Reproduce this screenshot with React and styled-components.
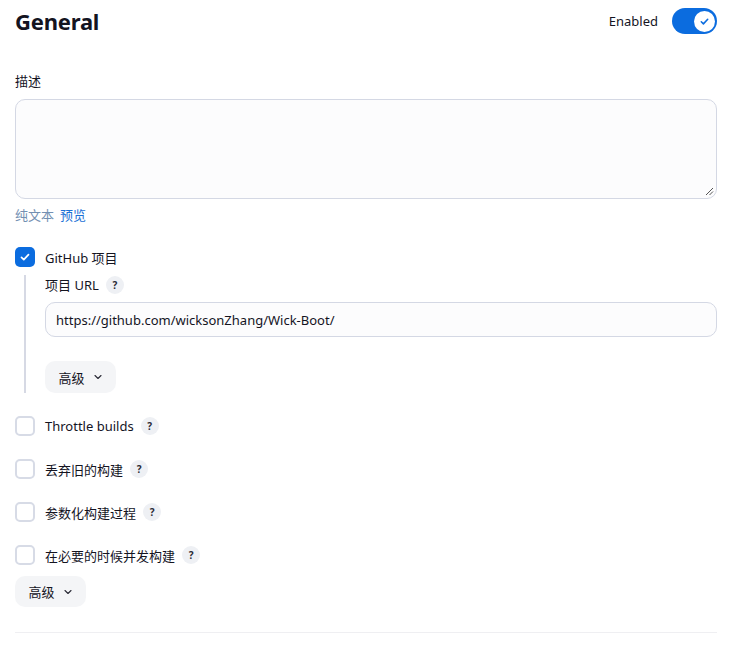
import React from "react";
import styled, { createGlobalStyle } from "styled-components";

const GlobalStyle = createGlobalStyle`
  body {
    margin: 0;
    background: #ffffff;
    font-family: "Noto Sans", "Noto Sans CJK SC", sans-serif;
    color: #14141f;
  }
`;

const Page = styled.div`
  width: 735px;
  box-sizing: border-box;
  padding: 0 18px 0 15px;
`;

const Header = styled.div`
  height: 42px;
  display: flex;
  align-items: center;
  justify-content: space-between;
`;

const Title = styled.h1`
  margin: 0;
  font-size: 22px;
  font-weight: 700;
  letter-spacing: -0.2px;
`;

const EnabledWrap = styled.label`
  display: flex;
  align-items: center;
  gap: 14px;
  font-size: 13px;
`;

const Toggle = styled.span`
  width: 45px;
  height: 26px;
  border-radius: 13px;
  background: #0b6cdf;
  display: flex;
  align-items: center;
  justify-content: flex-end;
  padding: 0 2px;
  box-sizing: border-box;
`;

const Knob = styled.span`
  width: 21px;
  height: 21px;
  border-radius: 50%;
  background: #fff;
  display: flex;
  align-items: center;
  justify-content: center;
`;

const FieldLabel = styled.div`
  margin-top: ${(p) => p.$top || 0}px;
  font-size: 13px;
  line-height: 20px;
  display: flex;
  align-items: center;
  gap: 10px;
`;

const TextArea = styled.div`
  margin-top: 8px;
  height: 100px;
  box-sizing: border-box;
  border: 1px solid #d4d8e4;
  border-radius: 10px;
  background: #fcfcfd;
  position: relative;
`;

const Grip = styled.svg`
  position: absolute;
  right: 2px;
  bottom: 2px;
`;

const Links = styled.div`
  margin-top: 6px;
  font-size: 13px;
  line-height: 20px;
  display: flex;
  gap: 6px;
`;

const LinkText = styled.span`
  color: ${(p) => (p.$muted ? "#7390b2" : "#1a70d6")};
`;

const CheckRow = styled.div`
  margin-top: ${(p) => p.$top}px;
  height: 20px;
  display: flex;
  align-items: center;
  gap: 10px;
  font-size: 13px;
`;

const Box = styled.span`
  width: 20px;
  height: 20px;
  box-sizing: border-box;
  border-radius: 5px;
  flex-shrink: 0;
  display: flex;
  align-items: center;
  justify-content: center;
  background: ${(p) => (p.$checked ? "#0b6cdf" : "#fff")};
  border: ${(p) => (p.$checked ? "none" : "2px solid #d7dbe6")};
`;

const Help = styled.span`
  width: 18px;
  height: 18px;
  border-radius: 50%;
  background: #eef0f4;
  color: #2a2a35;
  font-size: 10px;
  font-weight: 700;
  display: inline-flex;
  align-items: center;
  justify-content: center;
  margin-left: -3px;
`;

const Nested = styled.div`
  margin: 8px 0 0 9px;
  border-left: 2px solid #d6d9e4;
  padding-left: 19px;
`;

const Input = styled.div`
  margin-top: 7px;
  height: 35px;
  box-sizing: border-box;
  border: 1px solid #d4d8e4;
  border-radius: 10px;
  background: #fcfcfd;
  display: flex;
  align-items: center;
  padding: 0 10px;
  font-size: 13px;
`;

const AdvancedButton = styled.div`
  margin-top: ${(p) => p.$top}px;
  height: ${(p) => p.$h || 32}px;
  width: 71px;
  box-sizing: border-box;
  border-radius: 10px;
  background: #f4f5f7;
  display: flex;
  align-items: center;
  justify-content: center;
  gap: 8px;
  font-size: 13px;
`;

const Divider = styled.hr`
  margin: 25px 0 0;
  border: none;
  border-top: 1px solid #efeff2;
`;

const Check = ({ size = 12, color = "#fff" }) => (
  <svg width={size} height={size} viewBox="0 0 12 12" fill="none">
    <path d="M2.5 6.3l2.3 2.3 4.7-5" stroke={color} strokeWidth="1.7" strokeLinecap="round" strokeLinejoin="round" />
  </svg>
);

const Chevron = () => (
  <svg width="10" height="10" viewBox="0 0 10 10" fill="none">
    <path d="M2 3.5l3 3 3-3" stroke="#2a2a35" strokeWidth="1.1" strokeLinecap="round" strokeLinejoin="round" />
  </svg>
);

const Option = ({ label, top }) => (
  <CheckRow $top={top}>
    <Box />
    <span>{label}</span>
    <Help>?</Help>
  </CheckRow>
);

export default function App() {
  return (
    <Page>
      <GlobalStyle />
      <Header>
        <Title>General</Title>
        <EnabledWrap>
          Enabled
          <Toggle>
            <Knob>
              <Check size={11} color="#0b6cdf" />
            </Knob>
          </Toggle>
        </EnabledWrap>
      </Header>

      <FieldLabel $top={29}>描述</FieldLabel>
      <TextArea>
        <Grip width="10" height="10" viewBox="0 0 10 10">
          <path d="M9 2L2 9M9 5.5L5.5 9" stroke="#555" strokeWidth="1" />
        </Grip>
      </TextArea>
      <Links>
        <LinkText $muted>纯文本</LinkText>
        <LinkText>预览</LinkText>
      </Links>

      <CheckRow $top={22}>
        <Box $checked>
          <Check />
        </Box>
        <span>GitHub 项目</span>
      </CheckRow>
      <Nested>
        <FieldLabel $top={0}>
          项目 URL
          <Help>?</Help>
        </FieldLabel>
        <Input>https://github.com/wicksonZhang/Wick-Boot/</Input>
        <AdvancedButton $top={24}>
          高级 <Chevron />
        </AdvancedButton>
      </Nested>

      <Option label="Throttle builds" top={23} />
      <Option label="丢弃旧的构建" top={23} />
      <Option label="参数化构建过程" top={23} />
      <Option label="在必要的时候并发构建" top={23} />

      <AdvancedButton $top={11} $h={31}>
        高级 <Chevron />
      </AdvancedButton>
      <Divider />
    </Page>
  );
}
